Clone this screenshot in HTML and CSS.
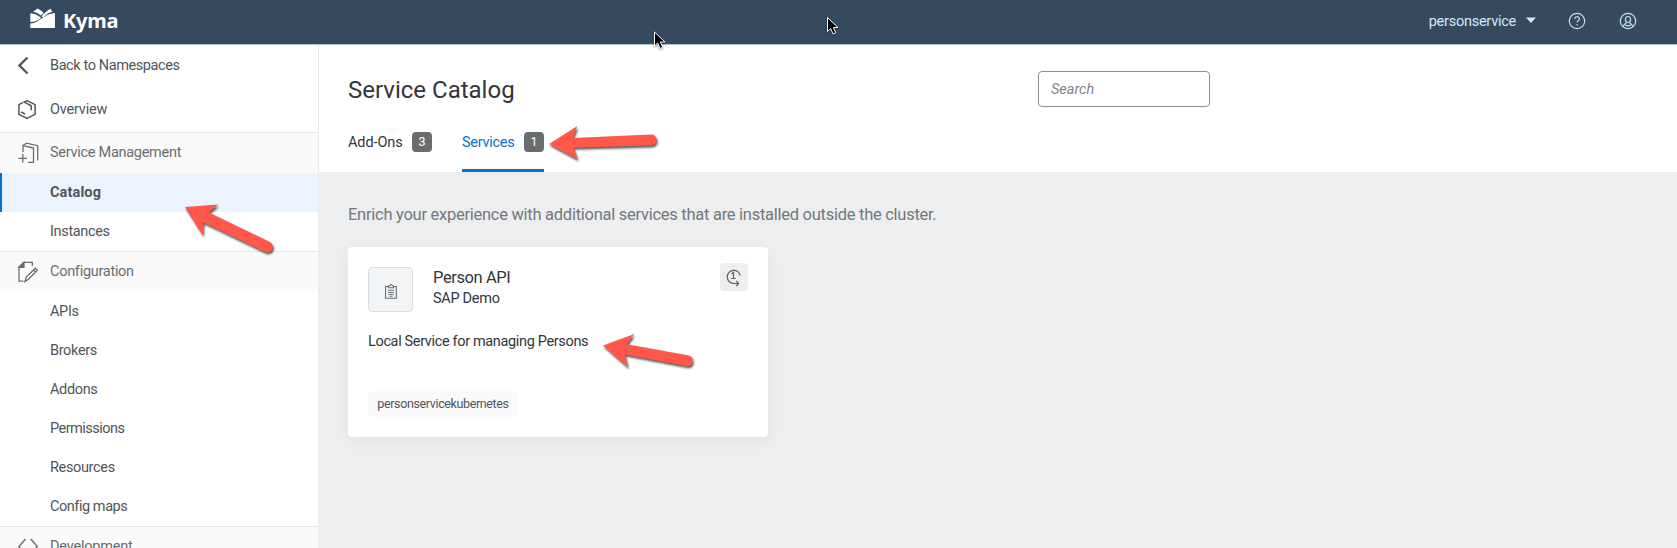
FILE: index.html
```html
<!DOCTYPE html>
<html lang="en">
<head>
<meta charset="utf-8">
<title>Kyma - Service Catalog</title>
<link rel="stylesheet" href="styles.css">
</head>
<body>
<header class="topbar">
  <div class="brand">
    <svg class="brand-mark" width="26" height="21" viewBox="0 0 26 21" fill="#fff">
      <path d="M0.300 5.200C5 5.500 8 7.500 11.300 10C8 12.800 4.500 13.800 0.300 14Z"/>
      <path d="M3 3.800L7.600 0.500C10 1.500 12 3.300 13.600 5L10.600 7.400C8.300 5.600 5.800 4.400 3 3.800Z"/>
      <path d="M20.400 0.800L22.400 3.800C18 5 15.500 7.500 13 9.500L11.500 8.300C14 5.400 17 2.700 20.400 0.800Z"/>
      <path d="M24.900 5V20H0.300V15.500C10 15.200 13 6 24.900 5Z"/>
    </svg>
    <span class="brand-name">Kyma</span>
  </div>
  <div class="tools">
    <span class="namespace">personservice</span>
    <svg class="caret" width="12" height="7" viewBox="0 0 12 7"><path d="M1 0.500H11L6 6Z" fill="#d1e8ff"/></svg>
    <svg class="help" width="18" height="18" viewBox="0 0 18 18" fill="none" stroke="#c5dcf3" stroke-width="1.200"><circle cx="9" cy="9" r="7.700"/><path d="M6.700 7C6.700 4 11.400 4 11.400 6.800C11.400 8.600 9.200 8.500 9.200 10.500"/><path d="M9.200 12V13.400"/></svg>
    <svg class="user" width="18" height="18" viewBox="0 0 18 18" fill="none" stroke="#c5dcf3" stroke-width="1.200"><circle cx="9" cy="9" r="7.700"/><ellipse cx="9" cy="7.500" rx="2.600" ry="3"/><path d="M4.300 14.800C4.600 12.600 5.700 11.500 7.500 10.700M13.700 14.800C13.400 12.600 12.300 11.500 10.500 10.700M6.300 12.800C8 14.200 10 14.200 11.700 12.800"/></svg>
  </div>
</header>
<div class="shell">
  <nav class="sidebar">
    <a class="row back"><svg width="22" height="20" viewBox="0 0 22 20" fill="none" stroke="#51555a" stroke-width="2.300"><path d="M9.500 1.500L1.500 9.500L9.500 17.500"/></svg><span class="w-back">Back to Namespaces</span></a>
    <a class="row overview"><svg width="22" height="20" viewBox="0 0 22 20" fill="none" stroke="#51555a" stroke-width="1.500"><path d="M4.800 2.600L0.900 4.700V14.300L9 18.500L17.100 14.300V4.700L9 0.700L6.200 2.100L13.200 5.800V10.300M3 11.800L7 14"/></svg><span class="w-overview">Overview</span></a>
    <a class="row group first"><svg width="22" height="22" viewBox="0 0 22 22" fill="none" stroke="#6a6d70" stroke-width="1.300"><path d="M5 10V3.500L15.500 6V20.300H10M5 3.500L8.500 1.200L19.700 3.700V18.500M0.500 16.300H9M4.800 12V20.500"/></svg><span class="w-sm">Service Management</span></a>
    <a class="row item active"><span class="w-catalog">Catalog</span></a>
    <a class="row item"><span class="w-inst">Instances</span></a>
    <a class="row group"><svg width="22" height="22" viewBox="0 0 22 22" fill="none" stroke="#6a6d70" stroke-width="1.300"><path d="M5.500 20.200H1V6L5.800 1.300H14.300V5M7 20.500L8.300 16L17.300 7.200L19.300 9.300L10.500 18.300ZM15.500 9L17.500 11"/><path d="M1 6.300L6 1.300V6.300Z" fill="#6a6d70"/></svg><span class="w-conf">Configuration</span></a>
    <a class="row item"><span class="w-api">APIs</span></a>
    <a class="row item"><span class="w-brokers">Brokers</span></a>
    <a class="row item"><span class="w-addons">Addons</span></a>
    <a class="row item"><span class="w-perm">Permissions</span></a>
    <a class="row item"><span class="w-res">Resources</span></a>
    <a class="row item"><span class="w-maps">Config maps</span></a>
    <a class="row group"><svg width="22" height="22" viewBox="0 0 22 22" fill="none" stroke="#6a6d70" stroke-width="1.400"><path d="M7.500 3L1 10.500L7.500 18M12.800 3L19.300 10.500L12.800 18"/></svg><span class="w-dev">Development</span></a>
  </nav>
  <main class="content">
    <section class="page-head">
      <div class="title-row">
        <h1 class="title">Service Catalog</h1>
        <input class="search" type="text" placeholder="Search">
      </div>
      <div class="tabs">
        <div class="tab"><span class="w-tab1">Add-Ons</span><span class="count">3</span></div>
        <div class="tab selected"><span class="w-tab2">Services</span><span class="count">1</span></div>
      </div>
    </section>
    <section class="body">
      <p class="intro">Enrich your experience with additional services that are installed outside the cluster.</p>
      <article class="card">
        <div class="card-head">
          <div class="thumb"><svg width="12" height="15" viewBox="0 0 12 15" fill="none" stroke="#6a6d70" stroke-width="1.100"><path d="M3 2.500H0.600V14.300H11.300V2.500H9M3.500 3.800V2.300L6 0.600L8.500 2.300V3.800ZM3 6.300H9M3 8.500H9M3.500 10.500H8.500M4.500 12.300H7.500"/></svg></div>
          <div class="names"><span class="name">Person API</span><span class="vendor">SAP Demo</span></div>
          <div class="once"><svg width="16" height="18" viewBox="0 0 16 18" fill="none" stroke="#5f6265" stroke-width="1.200"><path d="M14.300 6.500A6.600 6.600 0 1 0 7.500 14.500H12.500M10.200 12L12.700 14.500L10.200 17M5.500 5L7.500 3.500V9.500M5.300 9.500H9.700"/></svg></div>
        </div>
        <p class="desc">Local Service for managing Persons</p>
        <span class="tag">personservicekubernetes</span>
      </article>
    </section>
  </main>
</div>
<svg class="annotations" width="1677" height="548" viewBox="0 0 1677 548">
  <g class="arrows">
    <path d="M185 207L218 204.500L209 212.500L269.500 241.800A5.500 5.500 0 0 1 265.300 252L203.500 222.500L203 235.500Z"/>
    <path d="M549 144L577.300 126L573 138L651 134.500A5.500 5.500 0 0 1 651.500 145.500L573.500 147.800L577.800 159.500Z"/>
    <path d="M603 345.500L634.200 334L627 344.300L689 355.600A5.500 5.500 0 0 1 687.200 366.300L625 354.500L628 367.300Z"/>
  </g>
  <g class="cursors">
    <path d="M654.500 32V46L657.700 43L660 48.500L662.700 47.300L660.400 42H665Z"/>
    <path d="M827.500 17.500V31.500L830.700 28.500L833 34L835.700 32.800L833.400 27.500H838Z"/>
  </g>
</svg>
</body>
</html>
```
FILE: styles.css
```css
* { box-sizing: border-box; }
body { margin: 0; width: 1677px; height: 548px; overflow: hidden; position: relative; font-family: Roboto, "Noto Sans", sans-serif; font-size: 14.5px; color: #32363a; background: #edeef0; }
h1, p { margin: 0; font-weight: 400; }
span { white-space: nowrap; }
.topbar { height: 45px; background: #354a5f; border-bottom: 1px solid #b5bfc9; display: flex; justify-content: space-between; padding: 0 40px 0 30px; }
.brand { display: flex; gap: 7px; }
.brand-mark { margin-top: 8px; }
.brand-name { font: 700 20px/26px "Noto Sans", sans-serif; color: #fff; margin-top: 8px; letter-spacing: -0.2px; }
.tools { display: flex; align-items: center; height: 41px; color: #d1e8ff; }
.namespace { letter-spacing: -0.25px; padding-top: 1px; }
.caret { margin-left: 9px; margin-right: 1px; }
.help { margin-left: 30px; }
.user { margin-left: 33px; margin-top: 1px; }
.shell { display: flex; height: 503px; overflow: hidden; }
.sidebar { width: 319px; flex: none; background: #fff; border-right: 1px solid #e9eaeb; color: #51555a; }
.row { display: flex; align-items: center; padding-left: 18px; height: 39px; line-height: 20px; letter-spacing: -0.35px; }
.row svg { flex: none; margin-right: 10px; }
.back { height: 41px; letter-spacing: -0.4px; }
.overview { height: 46px; padding-top: 1px; letter-spacing: -0.2px; }
.group { height: 41px; background: #fafafa; border-top: 1px solid #e7e7e7; color: #6a6d70; letter-spacing: -0.28px; }
.item { padding-left: 50px; }
.active { background: #ebf3fc; box-shadow: inset 2px 0 #0a6ed1; font-weight: 700; letter-spacing: 0.12px; }
.w-perm { letter-spacing: -0.52px; }
.w-maps { letter-spacing: -0.45px; }
.w-dev { letter-spacing: -0.2px; }
.content { flex: 1; }
.page-head { height: 127px; background: #fff; padding: 26px 0 0 29px; display: flex; flex-direction: column; justify-content: space-between; }
.title-row { display: flex; align-items: flex-start; height: 37px; }
.title { font-size: 24px; line-height: 39px; width: 690px; }
.search { width: 172px; height: 36px; border: 1px solid #89919a; border-radius: 4px; padding: 0 12px; font: italic 14.5px Roboto, sans-serif; background: #fff; }
.search::placeholder { color: #7d858e; opacity: 1; }
.tabs { display: flex; gap: 30px; }
.tab { display: flex; justify-content: space-between; height: 40px; width: 84px; line-height: 21px; letter-spacing: -0.1px; }
.selected { width: 82px; color: #0a6ed1; border-bottom: 3px solid #0a6ed1; letter-spacing: -0.28px; }
.count { width: 20px; height: 20px; border-radius: 4px; background: #6a6d70; color: #fff; font-size: 12.5px; line-height: 20px; text-align: center; letter-spacing: 0; }
.body { padding: 31px 29px; }
.intro { font-size: 16.5px; line-height: 24px; color: #74777a; letter-spacing: -0.27px; }
.card { width: 420px; height: 190px; margin-top: 20px; background: #fff; border-radius: 4px; box-shadow: 0 4px 18px rgba(0,0,0,.055); padding: 16px 20px 0; }
.card-head { display: flex; }
.thumb { width: 45px; height: 45px; margin-top: 4px; border: 1px solid #d9dcdf; border-radius: 4px; background: #f3f4f5; display: flex; align-items: center; justify-content: center; padding-top: 3px; }
.names { display: flex; flex-direction: column; margin: 4px 0 0 20px; }
.name { font-size: 16.5px; line-height: 22px; letter-spacing: -0.4px; }
.vendor { line-height: 20px; letter-spacing: -0.3px; }
.once { width: 28px; height: 28px; margin-left: auto; border-radius: 4px; background: #eee; display: flex; align-items: center; justify-content: center; padding-top: 2px; }
.desc { line-height: 20px; margin-top: 20px; letter-spacing: -0.35px; }
.tag { display: block; width: 150px; height: 26px; margin-top: 39px; border-radius: 4px; background: #fafafa; text-align: center; font-size: 12.5px; line-height: 26px; color: #51555a; letter-spacing: -0.37px; }
.annotations { position: absolute; left: 0; top: 0; pointer-events: none; }
.arrows { fill: #ff584b; filter: drop-shadow(1px 2px 1px rgba(0,0,0,.65)); }
.cursors { fill: #000; stroke: #fff; stroke-width: 1; filter: drop-shadow(0 1px 1px rgba(0,0,0,.4)); }
```
